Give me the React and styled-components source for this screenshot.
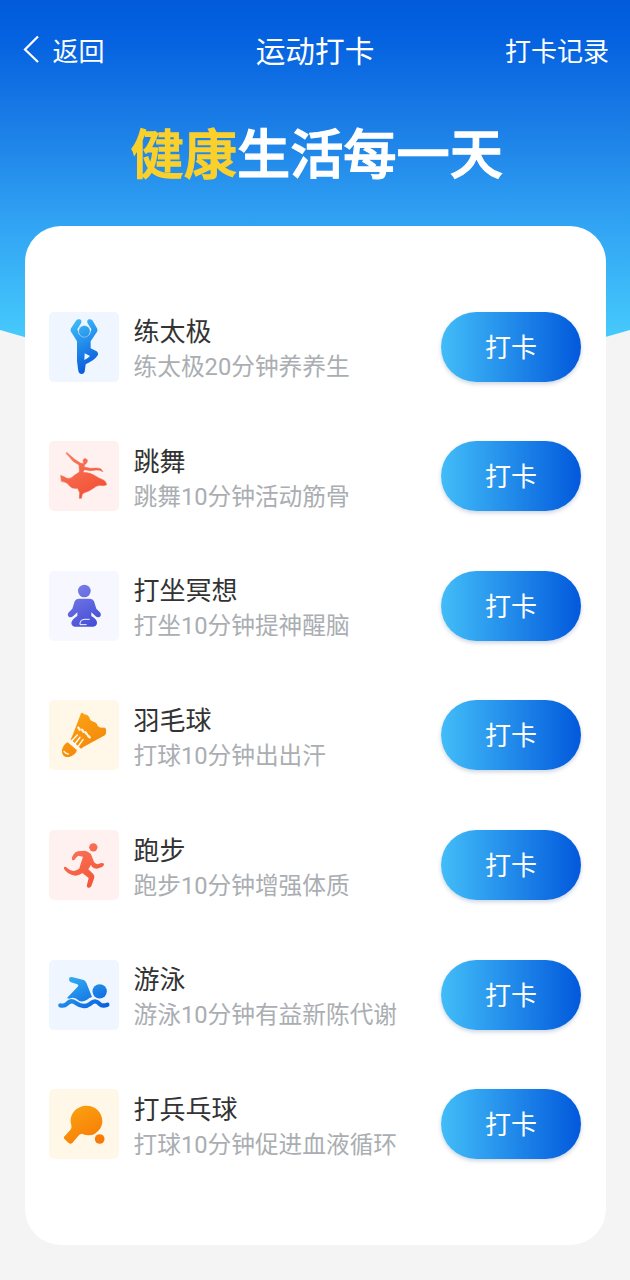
import React from 'react';
import styled, { createGlobalStyle } from 'styled-components';

const GlobalStyle = createGlobalStyle`
  * { box-sizing: border-box; }
  body {
    margin: 0;
    background: #f4f4f4;
    font-family: Roboto, "Noto Sans CJK SC", sans-serif;
  }
  button { font: inherit; border: 0; padding: 0; background: none; color: inherit; }
`;

const Page = styled.div`
  position: relative;
  min-height: 1280px;
  padding: 0 24px 35px 24.5px;
  overflow: hidden;
`;

const Backdrop = styled.div`
  position: absolute;
  inset: 0 0 auto;
  height: 420px;
  background: linear-gradient(180deg, #015bdb 0, #0562e0 40px, #1a7ce6 120px, #30a2f3 220px, #46cafc 338px);
  clip-path: polygon(0 0, 100% 0, 100% 330px, 50% 420px, 0 330px);
`;

const Header = styled.header`
  position: relative;
  display: grid;
  grid-template-columns: 1fr auto 1fr;
  align-items: center;
  height: 104px;
  margin: 0 -3px 0 -1.5px;
  color: #fff;
  font-size: 26px;
  line-height: 38px;
`;

const BackButton = styled.button`
  display: flex;
  align-items: center;
  gap: 12.5px;
  svg { display: block; margin-top: -6px; }
`;

const HeaderTitle = styled.h1`
  margin: 0 2px 0 0;
  font-size: 29.7px;
  font-weight: 400;
`;

const RecordLink = styled.button`
  justify-self: end;
`;

const Slogan = styled.h2`
  position: relative;
  height: 122px;
  margin: 0;
  padding-left: 3px;
  color: #fff;
  font-size: 53.2px;
  font-weight: 500;
  line-height: 105px;
  text-align: center;
  -webkit-text-stroke: 1.3px currentColor;
`;

const Highlight = styled.span`
  color: #fbd02b;
`;

const Card = styled.main`
  position: relative;
  height: 1019px;
  padding: 85.7px 25px 0 24.5px;
  border-radius: 36px;
  background: #fff;
`;

const List = styled.ul`
  display: flex;
  flex-direction: column;
  gap: 59.6px;
  margin: 0;
  padding: 0;
  list-style: none;
`;

const Row = styled.li`
  display: flex;
  align-items: center;
  height: 70px;
`;

const Tile = styled.div`
  width: 70px;
  height: 70px;
  margin-right: 14.5px;
  border-radius: 5px;
  background: ${(p) => p.$tint};
  svg { display: block; width: 70px; height: 70px; }
`;

const Info = styled.div`
  flex: 1;
  padding-top: 3px;
  white-space: nowrap;
`;

const Name = styled.div`
  color: #333;
  font-size: 26px;
  line-height: 38px;
`;

const Detail = styled.div`
  color: #aaaeb2;
  font-size: 23.7px;
  line-height: 32px;
`;

const CheckIn = styled.button`
  width: 140px;
  height: 70px;
  padding-top: 2px;
  border-radius: 35px;
  background: linear-gradient(90deg, #42bdf8, #0259dc);
  box-shadow: 0 2px 4px rgba(0, 40, 100, 0.2);
  color: #fff;
  font-size: 26px;
  line-height: 68px;
`;

function Glyph({ id, box, from, to, children }) {
  return (
    <svg viewBox={box} fill={`url(#${id})`} aria-hidden="true">
      <defs>
        <linearGradient id={id} gradientUnits="userSpaceOnUse" x1="80" y1="50" x2="155" y2="185">
          <stop offset="0" stopColor={from} />
          <stop offset="1" stopColor={to} />
        </linearGradient>
      </defs>
      {children}
    </svg>
  );
}

const TaiChi = () => (
  <Glyph id="taichi" box="15 21 210 210" from="#3fbdf8" to="#075bdc">
    <path d="M97 46Q101 41 108 43Q114 46 112 53L100 73L105 88Q121 104 137 88L142 73L130 53Q128 46 134 43Q141 41 145 46L159 70Q162 75 159 80L140 109V130L158 139Q166 146 159 154Q150 167 125 178L122 200Q119 208 111 207Q104 205 103 198Q97 170 99 139V109L81 80Q78 75 81 70ZM122 145L121 165Q132 160 138 153Z" fillRule="evenodd" />
    <circle cx="121" cy="79" r="17.5" stroke="#eff6ff" strokeWidth="1.2" />
  </Glyph>
);

const Dance = () => (
  <Glyph id="dance" box="15 16 210 210" from="#f7795c" to="#f34e32">
    <path d="M68 50L91 70L109 82L119 84L117 74Q119 67 126 69Q133 72 129 80Q126 86 121 88L121 94L139 98L158 97L170 99L177 108L167 104L157 103L139 105L121 102L117 110Q140 111 153 120Q165 128 178 133Q186 136 188 147Q180 151 167 149Q155 151 148 158Q136 167 121 171L115 175L112 188L106 188L107 171L101 158Q83 160 77 151Q69 139 52 137L50 119Q61 124 69 128Q83 130 91 119Q100 113 106 109L105 88L87 77L77 65L66 53Z" stroke="url(#dance)" strokeWidth="1.5" strokeLinejoin="round" />
  </Glyph>
);

const Meditate = () => (
  <Glyph id="meditate" box="15 15 210 210" from="#8183e8" to="#414bd6">
    <circle cx="121" cy="75" r="19" />
    <path d="M104 98H138Q147 98 150 106L157 128L169 140Q173 147 168 152Q161 156 155 151L142 139V150Q160 160 159 172Q157 182 148 182H92Q83 181 82 171Q83 160 100 150V139L87 151Q80 156 74 152Q69 147 73 140L85 128L92 106Q95 98 104 98Z" />
    <path d="M137 160H120Q109 161 108 171V176H128" fill="none" stroke="#f7f8ff" strokeWidth="3" />
  </Glyph>
);

const Badminton = () => (
  <Glyph id="badminton" box="15 17 210 210" from="#fca516" to="#f48408">
    <path d="M111 57Q115 53 120 60Q130 59 136 69Q138 80 148 82Q159 84 161 95Q168 102 177 100Q184 98 186 105Q187 116 184 122L118 158L111 163L80 135L86 122Z" />
    <path d="M103 100L107 106M114 106L118 112M124 114L129 120M132 124L137 129" stroke="#fff8e9" strokeWidth="7" strokeLinecap="round" />
    <path d="M100 122L83 140M108 129L93 148M117 136L102 157" stroke="#fff8e9" strokeWidth="4.5" strokeLinecap="round" />
    <path d="M71 144L99 168Q93 184 75 188Q60 190 55 178Q51 167 58 156Q63 147 71 144Z" />
    <path d="M60 171Q64 178 73 179" fill="none" stroke="#fff2d5" strokeWidth="4" strokeLinecap="round" />
  </Glyph>
);

const Run = () => (
  <Glyph id="run" box="15 15 210 210" from="#fb775d" to="#f25435">
    <circle cx="148" cy="67" r="12.5" />
    <path d="M102 79L121 77Q136 80 141 88L149 109Q152 117 160 118L172 114Q179 113 180 118Q180 123 174 126L159 131Q149 131 144 125L141 120L133 133L147 146Q152 151 151 158L142 183Q139 190 132 188Q127 186 129 179L134 159L112 142Q104 136 107 126L117 95L103 92Q97 95 93 103Q89 108 84 104Q83 95 89 88Q94 81 102 79Z" />
    <path d="M106 130L115 145Q99 155 87 151Q70 146 60 132Q58 124 66 126Q77 137 89 138Q99 138 106 130Z" />
  </Glyph>
);

const Swim = () => (
  <Glyph id="swim" box="15 17 210 210" from="#36b6f5" to="#075bdc">
    <path d="M76 70Q80 67 87 69L119 77Q124 79 127 85L144 128Q136 130 129 136Q117 144 106 140Q91 127 80 132Q75 134 69 131L101 97Q106 91 98 89L81 84Q73 79 76 70Z" />
    <circle cx="167" cy="111" r="21.5" />
    <path d="M49 153Q61 156 69 148Q82 134 97 147Q119 163 139 148Q154 134 167 149Q175 157 190 151" fill="none" stroke="url(#swim)" strokeWidth="13" strokeLinecap="round" />
  </Glyph>
);

const PingPong = () => (
  <Glyph id="pingpong" box="15 15 210 210" from="#fba713" to="#f87804">
    <path d="M128 65C154 65 175 85 175 112C175 128 165 141 153 149Q137 159 113 149Q107 150 102 157L85 177Q80 182 74 177L62 166Q57 160 63 155L78 139Q85 131 81 119C75 89 99 65 128 65Z" />
    <circle cx="167" cy="165" r="14.5" />
  </Glyph>
);

const activities = [
  { name: '练太极', detail: '练太极20分钟养养生', tint: '#eff6ff', Icon: TaiChi },
  { name: '跳舞', detail: '跳舞10分钟活动筋骨', tint: '#fff1ef', Icon: Dance },
  { name: '打坐冥想', detail: '打坐10分钟提神醒脑', tint: '#f7f8ff', Icon: Meditate },
  { name: '羽毛球', detail: '打球10分钟出出汗', tint: '#fff8e9', Icon: Badminton },
  { name: '跑步', detail: '跑步10分钟增强体质', tint: '#fff1ef', Icon: Run },
  { name: '游泳', detail: '游泳10分钟有益新陈代谢', tint: '#eff6ff', Icon: Swim },
  { name: '打兵乓球', detail: '打球10分钟促进血液循环', tint: '#fff8e9', Icon: PingPong },
];

export default function App() {
  return (
    <Page>
      <GlobalStyle />
      <Backdrop />
      <Header>
        <BackButton>
          <svg width="17" height="28" viewBox="0 0 17 28" fill="none" stroke="#fff" strokeWidth="2.2">
            <path d="M15 1.5L2 14.5L15 27" />
          </svg>
          返回
        </BackButton>
        <HeaderTitle>运动打卡</HeaderTitle>
        <RecordLink>打卡记录</RecordLink>
      </Header>
      <Slogan>
        <Highlight>健康</Highlight>生活每一天
      </Slogan>
      <Card>
        <List>
          {activities.map(({ name, detail, tint, Icon }) => (
            <Row key={name}>
              <Tile $tint={tint}>
                <Icon />
              </Tile>
              <Info>
                <Name>{name}</Name>
                <Detail>{detail}</Detail>
              </Info>
              <CheckIn>打卡</CheckIn>
            </Row>
          ))}
        </List>
      </Card>
    </Page>
  );
}
